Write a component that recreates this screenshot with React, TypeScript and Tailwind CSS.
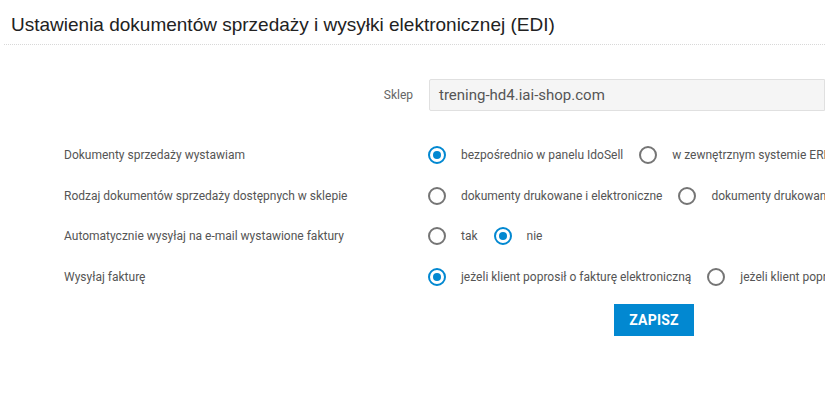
import React from 'react';

type Opt = { label: string; checked?: boolean };

const rows: { label: string; options: Opt[] }[] = [
  {
    label: 'Dokumenty sprzedaży wystawiam',
    options: [{ label: 'bezpośrednio w panelu IdoSell', checked: true }, { label: 'w zewnętrznym systemie ERP' }],
  },
  {
    label: 'Rodzaj dokumentów sprzedaży dostępnych w sklepie',
    options: [{ label: 'dokumenty drukowane i elektroniczne' }, { label: 'dokumenty drukowane' }],
  },
  {
    label: 'Automatycznie wysyłaj na e-mail wystawione faktury',
    options: [{ label: 'tak' }, { label: 'nie', checked: true }],
  },
  {
    label: 'Wysyłaj fakturę',
    options: [
      { label: 'jeżeli klient poprosił o fakturę elektroniczną', checked: true },
      { label: 'jeżeli klient poprosił o fakturę papierową' },
    ],
  },
];

function Radio({ checked }: { checked?: boolean }) {
  return (
    <span
      className={
        checked
          ? 'w-[18px] h-[18px] shrink-0 rounded-full border-2 border-[#0288d1] flex items-center justify-center'
          : 'w-[18px] h-[18px] shrink-0 rounded-full border-2 border-[#757575]'
      }
    >
      {checked && <span className="w-[8px] h-[8px] rounded-full bg-[#0288d1]" />}
    </span>
  );
}

export default function App() {
  return (
    <div className="w-[825px] h-[400px] overflow-hidden bg-white whitespace-nowrap font-['Roboto',sans-serif]">
      <div className="pl-[4px] pt-[13px]">
        <h1 className="pl-[7px] text-[19px] leading-[23px] text-[#222] font-['Liberation_Sans',Arial,sans-serif]">
          Ustawienia dokumentów sprzedaży i wysyłki elektronicznej (EDI)
        </h1>
        <div className="mt-[8px] border-b border-dotted border-[#d8d8d8]" />
      </div>

      {/* Shop selector */}
      <div className="mt-[34px] flex items-center">
        <span className="w-[413px] shrink-0 text-right text-[12px] text-[#666]">Sklep</span>
        <div className="ml-[16px] flex-1 min-w-0 h-[32px] flex items-center pl-[9px] bg-[#f5f5f5] border border-[#e0e0e0] rounded-l-[2px] text-[15px] text-[#555]">
          trening-hd4.iai-shop.com
        </div>
      </div>

      {/* Settings */}
      <div className="mt-[24px] flex flex-col">
        {rows.map((row) => (
          <div key={row.label} className="h-[40.5px] flex items-center">
            <span className="w-[428px] shrink-0 pl-[64px] text-[12px] text-[#555]">{row.label}</span>
            <div className="flex items-center gap-[16px]">
              {row.options.map((o) => (
                <label key={o.label} className="shrink-0 flex items-center gap-[15px] text-[12px] text-[#555]">
                  <Radio checked={o.checked} />
                  <span>{o.label}</span>
                </label>
              ))}
            </div>
          </div>
        ))}
      </div>

      <div className="mt-[7px] pl-[614px]">
        <button className="w-[80px] h-[32px] bg-[#0288d1] text-white text-[14px] font-bold tracking-[0.2px]">
          ZAPISZ
        </button>
      </div>
    </div>
  );
}
